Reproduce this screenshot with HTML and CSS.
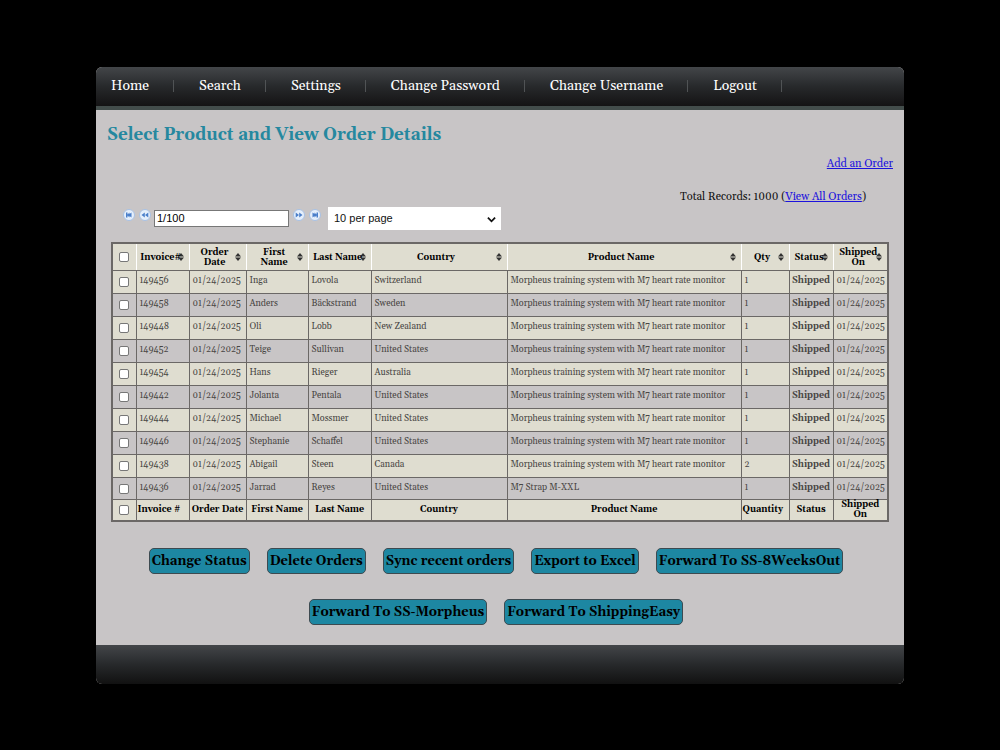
FILE: index.html
```html
<!DOCTYPE html>
<html lang="en">
<head>
<meta charset="utf-8">
<title>Select Product and View Order Details</title>
<link rel="stylesheet" href="styles.css">
</head>
<body>
<div class="page">
<nav class="menu">
<a href="#">Home</a>
<a href="#">Search</a>
<a href="#">Settings</a>
<a href="#">Change Password</a>
<a href="#">Change Username</a>
<a href="#">Logout</a>
</nav>
<main class="content">
<h1>Select Product and View Order Details</h1>
<div class="add"><a href="#">Add an Order</a></div>
<div class="total">Total Records: 1000 (<a href="#">View All Orders</a>)</div>
<form class="pager">
<button type="button" aria-label="First page"><svg viewBox="0 0 12 12"><circle cx="6" cy="6" r="5.5"/><path d="M3 3.500h1.500v2L6.500 3.500v1.500L8.500 3.500v5L6.500 7v1.500L4.500 6.500v2H3z"/></svg></button>
<button type="button" aria-label="Previous page"><svg viewBox="0 0 12 12"><circle cx="6" cy="6" r="5.5"/><path d="M5.800 3.500v5L2.500 6zM9.300 3.500v5L6 6z"/></svg></button>
<input class="pages" type="text" value="1/100" aria-label="Page">
<button type="button" aria-label="Next page"><svg viewBox="0 0 12 12"><circle cx="6" cy="6" r="5.5"/><path d="M2.700 3.500v5L6 6zM6.200 3.500v5L9.500 6z"/></svg></button>
<button type="button" aria-label="Last page"><svg viewBox="0 0 12 12"><circle cx="6" cy="6" r="5.5"/><path d="M9 3.500H7.500v2L5.500 3.500v1.500L3.500 3.500v5L5.500 7v1.500L7.500 6.500v2H9z"/></svg></button>
<span class="size"><select aria-label="Rows per page"><option>10 per page</option></select><svg viewBox="0 0 10 7"><path d="M1 1.500l4 4 4-4"/></svg></span>
</form>
<table class="orders">
<colgroup><col class="c-check"><col class="c-invoice"><col class="c-date"><col class="c-first"><col class="c-last"><col class="c-country"><col><col class="c-qty"><col class="c-status"><col class="c-shipped"></colgroup>
<thead>
<tr><th><input type="checkbox" aria-label="Select all"></th><th class="sort tight">Invoice#</th><th class="sort">Order Date</th><th class="sort">First Name</th><th class="sort tight">Last Name</th><th class="sort">Country</th><th class="sort">Product Name</th><th class="sort">Qty</th><th class="sort tight">Status</th><th class="sort tight">Shipped On</th></tr>
</thead>
<tbody>
<tr><td><input type="checkbox" aria-label="Select 149456"></td><td>149456</td><td>01/24/2025</td><td>Inga</td><td>Lovola</td><td>Switzerland</td><td>Morpheus training system with M7 heart rate monitor</td><td>1</td><td class="state">Shipped</td><td>01/24/2025</td></tr>
<tr><td><input type="checkbox" aria-label="Select 149458"></td><td>149458</td><td>01/24/2025</td><td>Anders</td><td>Bäckstrand</td><td>Sweden</td><td>Morpheus training system with M7 heart rate monitor</td><td>1</td><td class="state">Shipped</td><td>01/24/2025</td></tr>
<tr><td><input type="checkbox" aria-label="Select 149448"></td><td>149448</td><td>01/24/2025</td><td>Oli</td><td>Lobb</td><td>New Zealand</td><td>Morpheus training system with M7 heart rate monitor</td><td>1</td><td class="state">Shipped</td><td>01/24/2025</td></tr>
<tr><td><input type="checkbox" aria-label="Select 149452"></td><td>149452</td><td>01/24/2025</td><td>Teige</td><td>Sullivan</td><td>United States</td><td>Morpheus training system with M7 heart rate monitor</td><td>1</td><td class="state">Shipped</td><td>01/24/2025</td></tr>
<tr><td><input type="checkbox" aria-label="Select 149454"></td><td>149454</td><td>01/24/2025</td><td>Hans</td><td>Rieger</td><td>Australia</td><td>Morpheus training system with M7 heart rate monitor</td><td>1</td><td class="state">Shipped</td><td>01/24/2025</td></tr>
<tr><td><input type="checkbox" aria-label="Select 149442"></td><td>149442</td><td>01/24/2025</td><td>Jolanta</td><td>Pentala</td><td>United States</td><td>Morpheus training system with M7 heart rate monitor</td><td>1</td><td class="state">Shipped</td><td>01/24/2025</td></tr>
<tr><td><input type="checkbox" aria-label="Select 149444"></td><td>149444</td><td>01/24/2025</td><td>Michael</td><td>Mossmer</td><td>United States</td><td>Morpheus training system with M7 heart rate monitor</td><td>1</td><td class="state">Shipped</td><td>01/24/2025</td></tr>
<tr><td><input type="checkbox" aria-label="Select 149446"></td><td>149446</td><td>01/24/2025</td><td>Stephanie</td><td>Schaffel</td><td>United States</td><td>Morpheus training system with M7 heart rate monitor</td><td>1</td><td class="state">Shipped</td><td>01/24/2025</td></tr>
<tr><td><input type="checkbox" aria-label="Select 149438"></td><td>149438</td><td>01/24/2025</td><td>Abigail</td><td>Steen</td><td>Canada</td><td>Morpheus training system with M7 heart rate monitor</td><td>2</td><td class="state">Shipped</td><td>01/24/2025</td></tr>
<tr><td><input type="checkbox" aria-label="Select 149436"></td><td>149436</td><td>01/24/2025</td><td>Jarrad</td><td>Reyes</td><td>United States</td><td>M7 Strap M-XXL</td><td>1</td><td class="state">Shipped</td><td>01/24/2025</td></tr>
</tbody>
<tfoot>
<tr><th><input type="checkbox" aria-label="Select all rows"></th><th class="left">Invoice #</th><th>Order Date</th><th>First Name</th><th>Last Name</th><th>Country</th><th>Product Name</th><th class="left">Quantity</th><th>Status</th><th>Shipped On</th></tr>
</tfoot>
</table>
<div class="actions">
<button type="button">Change Status</button>
<button type="button">Delete Orders</button>
<button type="button">Sync recent orders</button>
<button type="button">Export to Excel</button>
<button type="button">Forward To SS-8WeeksOut</button>
<button type="button">Forward To SS-Morpheus</button>
<button type="button">Forward To ShippingEasy</button>
</div>
</main>
<footer class="foot"></footer>
</div>
</body>
</html>
```
FILE: styles.css
```css
* { box-sizing: border-box; }
body { margin: 0; padding: 67px 96px; background: #000; font-family: Georgia, Gelasio, "Liberation Serif", serif; color: #111; }
.page { border-radius: 6px; overflow: hidden; background: #c8c5c6; }
.menu { display: flex; align-items: center; height: 43px; padding: 0 0 2px 15px; background: linear-gradient(#434649, #27292b 50%, #141314); border-bottom: 4px solid #434d4b; }
.menu a { display: flex; align-items: center; color: #fff; font-size: 14px; line-height: 18px; text-decoration: none; white-space: nowrap; }
.menu a::after { content: ""; width: 1px; height: 12px; margin: 0 25px 0 24px; background: #505355; }
.content { padding: 15px 11px 20px; }
h1 { margin: 0; font-size: 17px; line-height: 20px; color: #25889f; }
a { color: #1c12dd; }
.add, .total { font-size: 11px; line-height: 16px; text-align: right; }
.add { margin-top: 11px; }
.total { margin: 17px 27px 0 0; }
.pager { display: flex; align-items: flex-start; padding-left: 16px; height: 37px; }
.pager button { flex: none; width: 12px; height: 12px; margin: 4px 4px 0 0; padding: 0; border: 0; background: none; }
.pager button svg { display: block; }
.pager circle { fill: #e5effb; stroke: #a9c1e2; }
.pager button path { fill: #4a7fca; }
.pages { width: 135px; height: 17px; margin: 5px 4px 0 -1px; padding: 0 2px 2px; border: 1px solid #777; font: 11px "Liberation Sans", sans-serif; }
.size { position: relative; display: block; width: 173px; margin: 2px 0 0 3px; }
.size select { display: block; width: 100%; height: 23px; padding: 0 6px 2px; appearance: none; border: 0; border-radius: 0; background: #fff; color: #111; font: 11px "Liberation Sans", sans-serif; }
.size svg { position: absolute; right: 5px; top: 9px; width: 9px; height: 7px; fill: none; stroke: #111; stroke-width: 2; pointer-events: none; }
.orders { width: calc(100% - 8px); margin-left: 4px; table-layout: fixed; border-collapse: collapse; border: 2px solid #6b6866; font-size: 9px; line-height: 10px; }
.c-check { width: 24px; } .c-invoice { width: 53px; } .c-date { width: 57px; } .c-first { width: 62px; } .c-last { width: 63px; }
.c-country { width: 136px; } .c-qty { width: 48px; } .c-status { width: 44px; } .c-shipped { width: 55px; }
.orders th { padding: 0; height: 21px; color: #000; background: #dfddd0; border: 1px solid #6b6866; }
.orders thead th { height: 27px; border-left-color: #fff; border-right-color: #fff; }
.orders th.left { text-align: left; padding-left: 1px; }
.orders td { height: 23px; padding: 5px 0 0 3px; vertical-align: top; color: #484644; border: 1px solid #6b6866; }
.orders tbody tr:last-child td { height: 22px; }
.orders tbody tr:nth-child(odd) { background: #dfddd0; }
.orders td:first-child { padding: 6px 0 0; text-align: center; }
.orders .state { padding-left: 0; text-align: center; font-weight: bold; }
.orders input { display: block; width: 10px; height: 10px; margin: 0 auto; appearance: none; border: 1px solid #777; border-radius: 2px; background: #fff; }
.orders input:checked { background: #25889f; }
.orders .sort { padding: 2px 12px 0 6px; background: #dfddd0 url("data:image/svg+xml,%3Csvg xmlns='http://www.w3.org/2000/svg' width='6' height='8'%3E%3Cpath d='M0 3.500L3 0l3 3.500zM0 4.500h6L3 8z' fill='%23333'/%3E%3C/svg%3E") no-repeat right 5px center; }
.orders .sort.tight { padding: 2px 6px 0 2px; }
.actions { display: flex; flex-wrap: wrap; justify-content: center; gap: 25px 17px; margin: 26px 28px 0 20px; }
.actions button { height: 26px; padding: 0 2px; border: 1px solid #3d4a50; border-radius: 5px; background: #1d87a2; color: #000; font: bold 13px Georgia, Gelasio, "Liberation Serif", serif; }
.foot { height: 39px; background: linear-gradient(#434649, #27292b 50%, #111); }
```
